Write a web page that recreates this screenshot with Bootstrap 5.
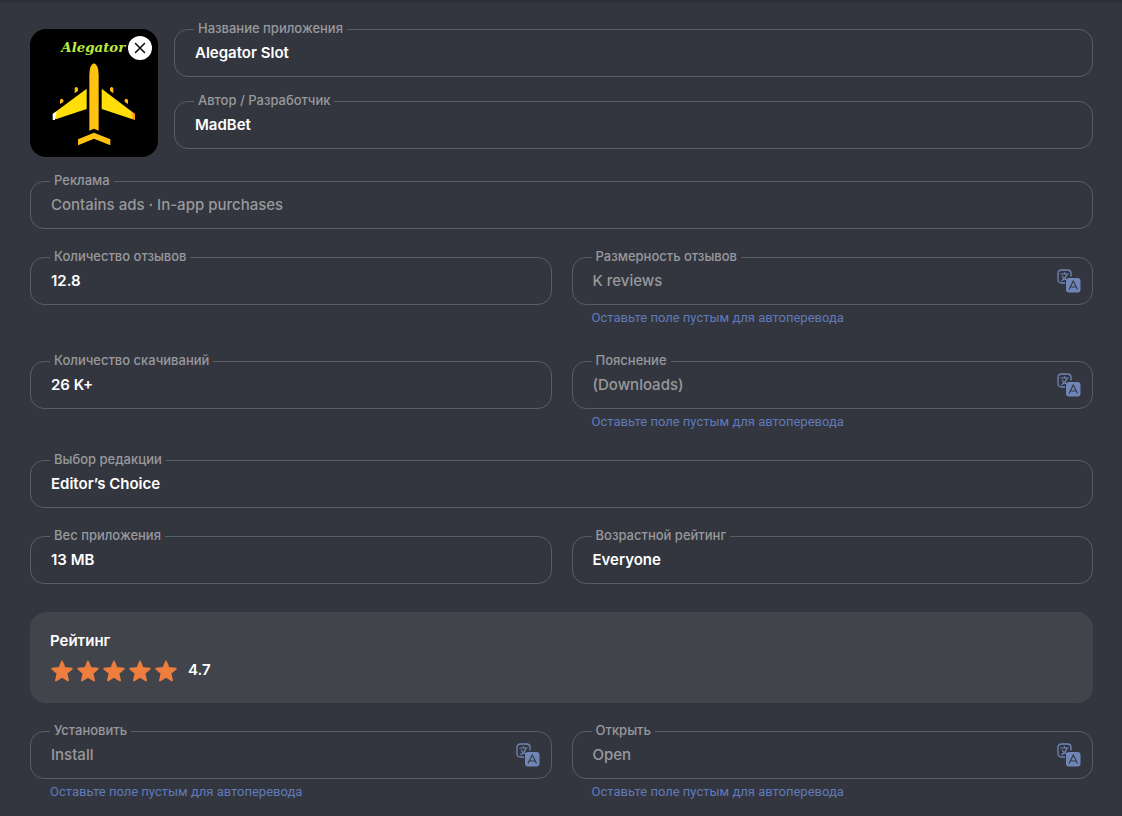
<!DOCTYPE html>
<html lang="ru">
<head>
<meta charset="utf-8">
<meta name="viewport" content="width=device-width, initial-scale=1">
<title>Настройки приложения</title>
<link href="https://cdn.jsdelivr.net/npm/bootstrap@5.3.0/dist/css/bootstrap.min.css" rel="stylesheet">
<style>
  body { background: #34363f; color: #fff; font-family: Inter, "Noto Sans", sans-serif; font-size: 15px; }
  .app-form { padding: 29px 29px 14px 30px; box-shadow: inset 0 3px 3px -1px #2c2e36; }
  .stack { display: grid; gap: 28px; }
  .pair { display: grid; grid-template-columns: 1fr 1fr; gap: 20px; }
  .pair-spaced { margin-bottom: 5px; }
  .app-icon { width: 128px; height: 128px; border-radius: 16px; background: #000; }
  .icon-remove { top: 7px; right: 6px; width: 24px; height: 24px; }
  .field-label { left: 20px; top: -11px; padding: 0 4px; background: #34363f; color: #98999c; font-size: 13px; line-height: 20px; font-weight: 500; z-index: 1; white-space: nowrap; }
  .field-input.form-control { height: 48px; border: 1px solid #5b5d64; border-radius: 14px; background: transparent; color: #fff; padding: 0 20px 2px; font-size: 15px; font-weight: 600; }
  .field-input.has-icon { padding-right: 52px; }
  .field-input::placeholder { color: #98999c; font-weight: 500; opacity: 1; }
  .translate-btn { right: 12px; top: 12px; width: 24px; height: 24px; color: #6f86b7; }
  .hint { margin-top: 3px; padding-left: 20px; font-family: Roboto, "Noto Sans", sans-serif; font-size: 13px; line-height: 20px; color: #5f7abb; }
  .rating-box { background: #42444c; border-radius: 16px; padding: 18px 20px 20px; }
  .rating-title { font-size: 15px; line-height: 22px; font-weight: 600; margin-bottom: 7px; }
  .stars { gap: 2px; color: #ee7e3e; }
  .score { font-size: 15px; font-weight: 600; line-height: 22px; margin-left: 10px; }
</style>
</head>
<body>
<svg class="d-none" xmlns="http://www.w3.org/2000/svg">
  <symbol id="translate" viewBox="0 0 24 24">
    <path d="M8 14H4.500Q1 14 1 10.500V4.500Q1 1 4.500 1H10.500Q14 1 14 4.500V7.500" fill="none" stroke="currentColor" stroke-width="1.300"/>
    <path d="M3.500 5H11.500M7.500 3.200V5M4.300 11.700Q8.500 10 10 5M5 7Q7 10.500 10 11.200" fill="none" stroke="currentColor" stroke-width="1.200"/>
    <rect x="9" y="9" width="14.500" height="14.500" rx="3" fill="currentColor"/>
    <path d="M12 20.500L16.250 12L20.500 20.500M13.300 18H19.200" fill="none" stroke="#34363f" stroke-width="1.100"/>
  </symbol>
  <symbol id="star" viewBox="0 0 24 24">
    <path d="M12 2.500L14.700 9L21.800 9.700L16.400 14.200L18.100 21.500L12 17.800L5.900 21.500L7.600 14.200L2.200 9.700L9.300 9Z" fill="currentColor" stroke="currentColor" stroke-width="1.800" stroke-linejoin="round"/>
  </symbol>
</svg>
<main class="app-form">
  <form class="stack">
    <div>
      <div class="d-flex gap-3 mb-4">
        <div class="position-relative flex-shrink-0 app-icon">
          <svg width="128" height="128" viewBox="30 33 384 384" role="img" aria-label="Alegator">
            <text x="124" y="103" font-family="DejaVu Serif, serif" font-size="40" font-style="italic" font-weight="700" fill="#b9ec3d">Alegator</text>
            <path d="M208 338V172Q208 140 222 136Q236 140 236 172V338L222 332Z" fill="#ffc20e"/>
            <path d="M200 212V273L107 304L98 288Z" fill="#ffde0a"/>
            <path d="M245 212V273L338 304L345 288Z" fill="#ffde0a"/>
            <path d="M98 288L110 280L105 306H98Z" fill="#fff"/>
            <path d="M345 288L335 281L338 304L345 306Z" fill="#ff9d16"/>
            <path d="M174 364L222 344L271 364V382L222 362L174 382Z" fill="#ffc20e"/>
            <path d="M164 226V211Q169 203 174 211V219ZM120 258V246Q125 238 130 246V252ZM280 226V211Q275 203 270 211V219ZM324 258V246Q319 238 314 246V252Z" fill="#fdb813"/>
          </svg>
          <button type="button" class="icon-remove btn p-0 border-0 rounded-circle bg-white position-absolute d-flex" aria-label="Удалить">
            <svg width="24" height="24" viewBox="0 0 24 24"><path d="M7.500 7.500L16.500 16.500M16.500 7.500L7.500 16.500" stroke="#111" stroke-width="1.600" stroke-linecap="round"/></svg>
          </button>
        </div>
        <div class="flex-grow-1 d-grid gap-4 align-content-start">
          <div class="position-relative"><label class="field-label position-absolute" for="name">Название приложения</label><input class="field-input form-control" id="name" value="Alegator Slot"></div>
          <div class="position-relative"><label class="field-label position-absolute" for="author">Автор / Разработчик</label><input class="field-input form-control" id="author" value="MadBet"></div>
        </div>
      </div>
      <div class="position-relative"><label class="field-label position-absolute" for="ads">Реклама</label><input class="field-input form-control" id="ads" placeholder="Contains ads · In-app purchases"></div>
    </div>

    <div class="pair pair-spaced">
      <div class="position-relative"><label class="field-label position-absolute" for="reviews">Количество отзывов</label><input class="field-input form-control" id="reviews" value="12.8"></div>
      <div class="position-relative"><label class="field-label position-absolute" for="unit">Размерность отзывов</label><input class="field-input has-icon form-control" id="unit" placeholder="K reviews">
        <button type="button" class="translate-btn btn p-0 border-0 position-absolute d-flex" aria-label="Перевести"><svg width="24" height="24"><use href="#translate"/></svg></button>
        <div class="hint">Оставьте поле пустым для автоперевода</div></div>
    </div>

    <div class="pair">
      <div class="position-relative"><label class="field-label position-absolute" for="downloads">Количество скачиваний</label><input class="field-input form-control" id="downloads" value="26 K+"></div>
      <div class="position-relative"><label class="field-label position-absolute" for="note">Пояснение</label><input class="field-input has-icon form-control" id="note" placeholder="(Downloads)">
        <button type="button" class="translate-btn btn p-0 border-0 position-absolute d-flex" aria-label="Перевести"><svg width="24" height="24"><use href="#translate"/></svg></button>
        <div class="hint">Оставьте поле пустым для автоперевода</div></div>
    </div>

    <div class="position-relative"><label class="field-label position-absolute" for="choice">Выбор редакции</label><input class="field-input form-control" id="choice" value="Editor’s Choice"></div>

    <div class="pair">
      <div class="position-relative"><label class="field-label position-absolute" for="size">Вес приложения</label><input class="field-input form-control" id="size" value="13 MB"></div>
      <div class="position-relative"><label class="field-label position-absolute" for="age">Возрастной рейтинг</label><input class="field-input form-control" id="age" value="Everyone"></div>
    </div>

    <section class="rating-box">
      <div class="rating-title">Рейтинг</div>
      <div class="d-flex align-items-start">
        <div class="stars d-flex" role="img" aria-label="5 звёзд">
          <svg width="24" height="24"><use href="#star"/></svg><svg width="24" height="24"><use href="#star"/></svg><svg width="24" height="24"><use href="#star"/></svg><svg width="24" height="24"><use href="#star"/></svg><svg width="24" height="24"><use href="#star"/></svg>
        </div>
        <span class="score">4.7</span>
      </div>
    </section>

    <div class="pair">
      <div class="position-relative"><label class="field-label position-absolute" for="install">Установить</label><input class="field-input has-icon form-control" id="install" placeholder="Install">
        <button type="button" class="translate-btn btn p-0 border-0 position-absolute d-flex" aria-label="Перевести"><svg width="24" height="24"><use href="#translate"/></svg></button>
        <div class="hint">Оставьте поле пустым для автоперевода</div></div>
      <div class="position-relative"><label class="field-label position-absolute" for="open">Открыть</label><input class="field-input has-icon form-control" id="open" placeholder="Open">
        <button type="button" class="translate-btn btn p-0 border-0 position-absolute d-flex" aria-label="Перевести"><svg width="24" height="24"><use href="#translate"/></svg></button>
        <div class="hint">Оставьте поле пустым для автоперевода</div></div>
    </div>
  </form>
</main>
<script src="https://cdn.jsdelivr.net/npm/bootstrap@5.3.0/dist/js/bootstrap.bundle.min.js"></script>
</body>
</html>
